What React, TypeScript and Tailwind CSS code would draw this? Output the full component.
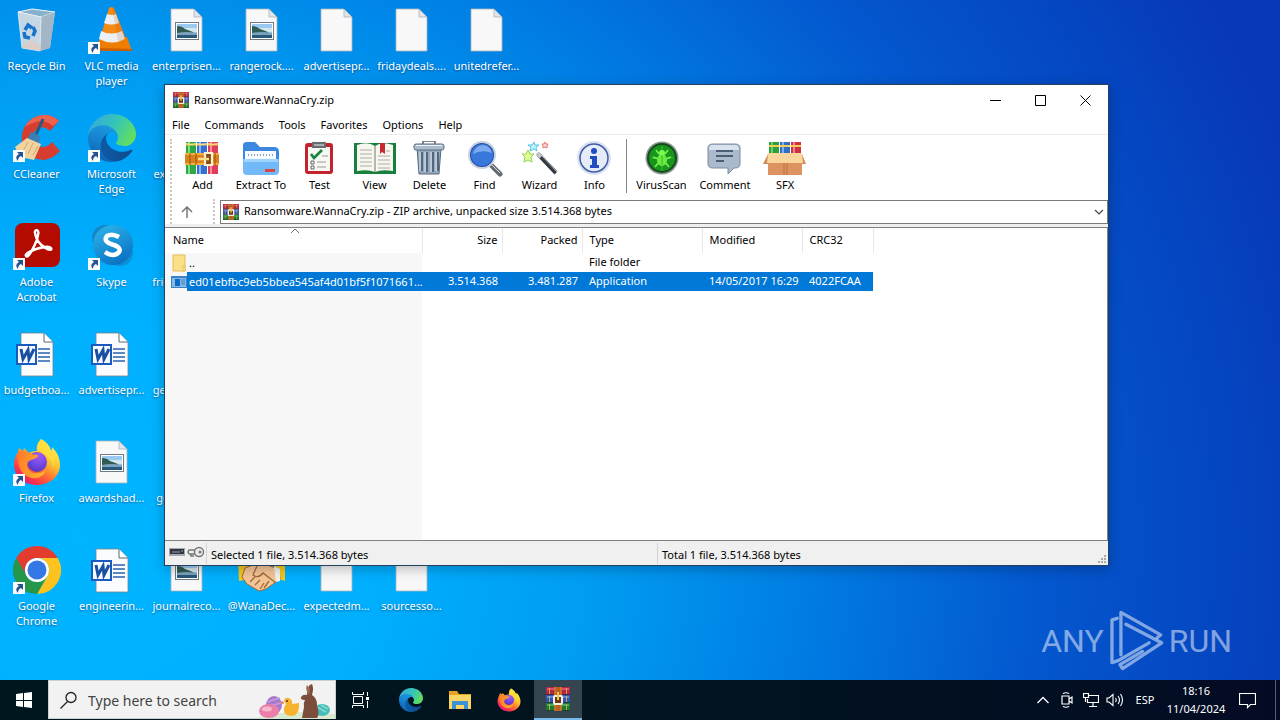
import { ReactNode } from 'react';

type IconKind =
  | 'bin' | 'vlc' | 'image' | 'blank' | 'ccleaner' | 'edge' | 'acrobat' | 'skype'
  | 'word' | 'firefox' | 'chrome' | 'handshake';

interface DesktopItem {
  label: string;
  icon: IconKind;
  shortcut?: boolean;
}

// one array per desktop column, null = empty cell
const DESKTOP: (DesktopItem | null)[][] = [
  [
    { label: 'Recycle Bin', icon: 'bin' },
    { label: 'CCleaner', icon: 'ccleaner', shortcut: true },
    { label: 'Adobe Acrobat', icon: 'acrobat', shortcut: true },
    { label: 'budgetboa...', icon: 'word' },
    { label: 'Firefox', icon: 'firefox', shortcut: true },
    { label: 'Google Chrome', icon: 'chrome', shortcut: true },
  ],
  [
    { label: 'VLC media player', icon: 'vlc', shortcut: true },
    { label: 'Microsoft Edge', icon: 'edge', shortcut: true },
    { label: 'Skype', icon: 'skype', shortcut: true },
    { label: 'advertisepr...', icon: 'word' },
    { label: 'awardshad...', icon: 'image' },
    { label: 'engineerin...', icon: 'word' },
  ],
  [
    { label: 'enterprisen...', icon: 'image' },
    { label: 'expectedm...', icon: 'blank' },
    { label: 'fridaydeals....', icon: 'blank' },
    { label: 'generalboa...', icon: 'blank' },
    { label: 'goodshad...', icon: 'blank' },
    { label: 'journalreco...', icon: 'image' },
  ],
  [{ label: 'rangerock....', icon: 'image' }, null, null, null, null, { label: '@WanaDec...', icon: 'handshake' }],
  [{ label: 'advertisepr...', icon: 'blank' }, null, null, null, null, { label: 'expectedm...', icon: 'blank' }],
  [{ label: 'fridaydeals....', icon: 'blank' }, null, null, null, null, { label: 'sourcesso...', icon: 'blank' }],
  [{ label: 'unitedrefer...', icon: 'blank' }, null, null, null, null, null],
];

const MENU = ['File', 'Commands', 'Tools', 'Favorites', 'Options', 'Help'];

const EdgeIcon = ({ className }: { className: string }) => (
  <svg viewBox="0 0 256 256" className={className}>
    <defs>
      <linearGradient id="edgeA" x1="0.2" x2="1" y1="0.5" y2="0.6"><stop offset="0" stopColor="#0c59a4" /><stop offset="1" stopColor="#114a8b" /></linearGradient>
      <linearGradient id="edgeB" x1="0.6" x2="0.3" y1="0" y2="1"><stop offset="0" stopColor="#1b9de2" /><stop offset="0.5" stopColor="#1680cf" /><stop offset="1" stopColor="#0d5fb0" /></linearGradient>
      <linearGradient id="edgeC" x1="0" x2="1" y1="0.3" y2="0.7"><stop offset="0" stopColor="#35a9dc" /><stop offset="0.5" stopColor="#36c6b6" /><stop offset="1" stopColor="#66e056" /></linearGradient>
    </defs>
    <path fill="url(#edgeA)" d="M231.1 190.5c-3.4 1.8-6.9 3.4-10.5 4.7-11.5 4.3-23.6 6.5-35.9 6.5-47.3 0-88.5-32.5-88.5-74.3.1-11.4 6.4-21.9 16.4-27.3-42.8 1.8-53.8 46.4-53.8 72.5 0 74 68.1 81.4 82.8 81.4 7.9 0 19.8-2.3 27-4.6l1.3-.4c27.6-9.5 51-28.1 66.6-52.8 1.2-1.9.6-4.3-1.2-5.5-1.3-.8-2.9-.9-4.2-.2z" />
    <path fill="url(#edgeB)" d="M105.7 241.4c-8.9-5.5-16.6-12.8-22.7-21.3-26.3-36-18.4-86.5 17.6-112.8 3.8-2.7 7.7-5.2 11.9-7.2 3.1-1.5 8.4-4.1 15.5-4 10.1.1 19.6 4.9 25.7 13 4 5.4 6.3 11.9 6.4 18.7 0-.2 24.5-79.6-80-79.6-43.9 0-80 41.7-80 78.2-.2 19.3 4 38.5 12.1 56 27.6 58.8 94.8 87.6 156.4 67.1-21.1 6.6-44.1 3.7-62.9-8.1z" />
    <path fill="url(#edgeC)" d="M152.3 148.9c-.8 1-3.3 2.5-3.3 5.7 0 2.6 1.7 5.1 4.7 7.2 14.4 10 41.5 8.7 41.6 8.7 10.7 0 21.1-2.9 30.3-8.3 18.8-11 30.4-31.1 30.4-52.9.3-22.4-8-37.3-11.3-43.9C223.5 23.9 177.7 0 128 0 58 0 1 56.2 0 126.2c.5-36.5 36.8-66 80-66 3.5 0 23.5.3 42 10.1 16.3 8.6 24.9 18.9 30.8 29.2 6.2 10.7 7.3 24.1 7.3 29.5 0 5.3-2.7 13.3-7.8 19.9z" />
  </svg>
);

const FirefoxIcon = ({ className }: { className: string }) => (
  <svg viewBox="0 0 48 48" className={className}>
    <defs>
      <linearGradient id="ffA" x1="0.8" x2="0.2" y1="0.1" y2="0.95"><stop offset="0" stopColor="#fff04a" /><stop offset="0.35" stopColor="#ffbd2f" /><stop offset="0.6" stopColor="#ff7034" /><stop offset="0.85" stopColor="#f8304f" /><stop offset="1" stopColor="#e3157f" /></linearGradient>
      <radialGradient id="ffB" cx="0.6" cy="0.2" r="0.9"><stop offset="0" stopColor="#a45af5" /><stop offset="0.6" stopColor="#6a45e0" /><stop offset="1" stopColor="#5a2fa8" /></radialGradient>
      <linearGradient id="ffC" x1="0" x2="1" y1="0.2" y2="0.5"><stop offset="0" stopColor="#ff7a2a" /><stop offset="1" stopColor="#ffb52e" /></linearGradient>
    </defs>
    <path fill="url(#ffA)" d="M28 1c7 4 9 8 10 12 1-1 1-3 1-4 5 5 8 11 8 18 0 11-10 20-23 20S1 38 1 26c0-5 2-9 4-12l1-4 4 3 1-3 5 5c3-2 6-2 8-2-1-5 1-9 4-12z" />
    <circle cx="24" cy="24" r="10" fill="url(#ffB)" />
    <path fill="#ffdf3d" opacity=".75" d="M28 1c7 4 9 8 10 12 3 5 5 11 3 17-1-5-3-8-6-10-1-4-8-6-10-8-1-4 1-8 3-11z" />
    <path fill="url(#ffC)" d="M5 14c4-2 9-1 12 1 2 2 5 1 8 2 0 3-4 4-7 5s-4 3-4 6c1 5 6 8 11 7 4 0 6-2 8-3-2 6-8 9-14 8C9 38 4 30 5 14z" />
  </svg>
);

// three stacked books held by a vertical belt
const RarIcon = ({ className }: { className: string }) => (
  <svg viewBox="0 0 24 24" className={className}>
    <rect x="0" y="0" width="24" height="8" fill="#b02848" /><rect x="1" y="1" width="22" height="2" fill="#d8506d" />
    <rect x="0" y="8" width="24" height="8" fill="#2f55b4" /><rect x="1" y="9" width="22" height="2" fill="#5f86dc" />
    <rect x="0" y="16" width="24" height="8" fill="#1d7a33" /><rect x="1" y="17" width="22" height="2" fill="#45ac58" />
    <path d="M3.500 1v6M3.500 9v6M3.500 17v6M20.500 1v6M20.500 9v6M20.500 17v6" stroke="#e8b93c" strokeOpacity=".8" />
    <path d="M0 7.500h24M0 15.500h24M0 23.500h24" stroke="#1c1c28" strokeOpacity=".6" />
    <rect x="8.500" width="7" height="24" fill="#b9601e" /><path d="M9 0v24M15 0v24" stroke="#e08a34" />
    <rect x="8" y="9" width="8" height="8" rx="1" fill="#6b3a14" stroke="#f4eee4" strokeWidth="2" />
    <path d="M12 5v8" stroke="#f2c84a" strokeWidth="2" />
  </svg>
);

const FoldedPage = ({ children }: { children?: ReactNode }) => (
  <>
    <path d="M8 3h23l8 8v34H8z" fill="#f8f8f8" stroke="#a9b4bc" strokeWidth=".8" />
    <path d="M31 3v8h8z" fill="#dfe5e9" stroke="#a9b4bc" strokeWidth=".8" />
    {children}
  </>
);

const DRAWINGS: Record<Exclude<IconKind, 'edge' | 'firefox'>, ReactNode> = {
  bin: (
    <>
      <path d="M5 6 19 3l23 3-5 36-10 3-18-3z" fill="#b4cde0" />
      <path d="M5 6 19 3l23 3-14 5z" fill="#86b0cc" stroke="#eef5fa" />
      <path d="m28 11 14-5-5 36-10 3z" fill="#a3b6c6" />
      <path d="M5 6l23 5-1 34-18-3z" fill="#c5d7e5" stroke="#e8f1f7" strokeWidth=".7" />
      <path d="m9 40 9-6 9 5v6l-18-3z" fill="#dccdc8" />
      <g fill="none" stroke="#1674cc" strokeWidth="3.500">
        <path d="m12 24 3-5 4 3" /><path d="m20 21 2 4-2 5" /><path d="m11 26 1 5 5 1" />
      </g>
    </>
  ),
  vlc: (
    <>
      <path d="m12 32-4 12 36 1-5-14z" fill="#ef7d00" /><path d="m8 42 36 1v2H8z" fill="#c85f00" />
      <path d="M21 2q3-2 5 0l12 31q-13 8-26 0z" fill="#f58a14" />
      <path d="m19 8-3 9q7 3 15 0l-3-9q-4 2-9 0zM13 25l-2 8q13 7 26 0l-3-8q-11 5-21 0z" fill="#edf0f2" />
      <path d="M24 1h2l12 32-8 3z" fill="#a74b00" opacity=".16" />
    </>
  ),
  image: (
    <FoldedPage>
      <rect x="12.500" y="16.500" width="23" height="17" fill="#fff" stroke="#6f7a84" />
      <path d="M14 18h20v14H14z" fill="#9cc9f0" /><path d="M14 22h20v4H14z" fill="#d4e6ee" />
      <path d="M14 20q5 0 8 3l8 3v2H14z" fill="#2f5b52" /><path d="M14 27q9-2 20 0v2H14z" fill="#7ba3bd" /><path d="M14 29h20v3H14z" fill="#29577a" />
    </FoldedPage>
  ),
  blank: <FoldedPage />,
  ccleaner: (
    <>
      <path d="M46 7Q35-3 20 4 7 12 9 28q4 17 22 18 9-1 16-9l-8-9q-7 8-15 3-7-6-3-13 7-9 16-1z" fill="#d63c30" />
      <path d="M46 7Q35-3 20 4q-6 4-8 9 17-11 28-1z" fill="#ee6250" />
      <path d="m30 5-9 20" stroke="#27597f" strokeWidth="3" /><path d="m18 18 9 4-1 9-12-5z" fill="#3980b4" />
      <path d="M14 24 2 33l5 10 14 3 7-16z" fill="#f1d3a0" /><path d="m15 28-5 9m10-8-5 11m10-8-5 9" stroke="#c99c5f" strokeWidth=".8" />
    </>
  ),
  acrobat: (
    <>
      <rect x="2" y="1" width="45" height="44" rx="8" fill="#b30b00" />
      <path d="M13 34c-3-4 22-12 25-8 3 5-14-1-16-15-1-4 5-4 3 2-1 7-10 25-12 21z" fill="none" stroke="#fff" strokeWidth="2.400" strokeLinejoin="round" />
    </>
  ),
  skype: (
    <>
      <defs>
        <linearGradient id="skA" x1="0.2" x2="0.7" y1="0" y2="1"><stop offset="0" stopColor="#2bb3ea" /><stop offset="1" stopColor="#0a6fc2" /></linearGradient>
      </defs>
      <circle cx="17" cy="16" r="13" fill="#1586c9" /><circle cx="32" cy="31" r="13" fill="#0f8fd8" />
      <circle cx="25" cy="23" r="20" fill="url(#skA)" />
      <path d="M31 15q-7-4-12-1-4 5 4 8 11 3 8 8-5 6-14 0" fill="none" stroke="#fff" strokeWidth="4.500" />
    </>
  ),
  word: (
    <>
      <path d="M8 3h23l9 9v34H8z" fill="#fbfcfd" stroke="#718493" strokeWidth=".8" />
      <path d="M31 3v9h9" fill="#fff" stroke="#566878" />
      <path d="M25 19h12M25 23h12M25 27h12M25 31h12" stroke="#2862ad" strokeWidth="1.300" />
      <rect x="4" y="15" width="19" height="19" fill="#f7fbff" stroke="#185abd" strokeWidth="2" />
      <path d="m8 19 2 10 5-9 1 9 5-10" fill="none" stroke="#184fa0" strokeWidth="3" />
    </>
  ),
  chrome: (
    <>
      <path d="M3.200 12A24 24 0 0 1 44.800 12H24A12 12 0 0 0 13.600 30z" fill="#e33b2e" />
      <path d="M44.800 12A24 24 0 0 1 24 48l10.400-18A12 12 0 0 0 24 12z" fill="#fcc31e" />
      <path d="M24 48A24 24 0 0 1 3.200 12l10.400 18a12 12 0 0 0 20.800 0z" fill="#269748" />
      <circle cx="24" cy="24" r="12" fill="#fff" /><circle cx="24" cy="24" r="9.500" fill="#3478e5" />
    </>
  ),
  handshake: (
    <>
      <path d="M0 15h12v18l-11 2zM36 15h11v20l-10-3z" fill="#f6c81c" />
      <path d="m7 22 10-4 12 1 12 4 1 10-14 10-7 2-12-7-5-7z" fill="#f5c698" stroke="#a06a34" />
      <path d="m19 20-4 9q5 4 10-2l13 10M12 36l5-5m0 8 5-5m0 9 4-6M31 35l-5 7" fill="none" stroke="#a06a34" strokeWidth="1.300" />
      <path d="m36 20 6 3v12l-4 1z" fill="#f1f3ef" />
    </>
  ),
};

const DesktopIcon = ({ kind }: { kind: IconKind }) => {
  if (kind === 'edge') return <EdgeIcon className="size-12" />;
  if (kind === 'firefox') return <FirefoxIcon className="size-12" />;
  return <svg viewBox="0 0 48 48" className="size-12">{DRAWINGS[kind]}</svg>;
};

const ShortcutArrow = () => (
  <svg viewBox="0 0 12 12" className="absolute bottom-0 left-0 size-3">
    <path d="M0 0h12v12H0z" fill="#f9fbfd" />
    <path d="M4 2h6v6L8 6q-3 1-3 5-4-4 1-7z" fill="#26528f" />
  </svg>
);

const DesktopCell = ({ item }: { item: DesktopItem | null }) => {
  if (!item) return <div className="h-[108px]" />;
  return (
    <button className="flex h-[108px] flex-col items-center pt-1.5 pr-0.5">
      <span className="relative">
        <DesktopIcon kind={item.icon} />
        {item.shortcut && <ShortcutArrow />}
      </span>
      <span className="mt-1 w-[74px] px-1 text-center leading-[15px] text-white text-shadow-[0_1px_2px_rgb(0_40_90/0.6)]">
        <span className="-mx-1 inline-block">{item.label}</span>
      </span>
    </button>
  );
};

interface Tool {
  label: string;
  width: string;
  drawing: ReactNode;
  wide?: boolean;
}

const TOOLS: Tool[] = [
  {
    label: 'Add', width: 'w-[55px]', drawing: (
      <>
        <path d="M1 1h10v32H1z" fill="#2fa843" /><path d="M12 1h10v32H12z" fill="#386ed2" /><path d="M23 1h10v32H23z" fill="#dd3e59" />
        <path d="M3 1h2v32H3z" fill="#7be083" /><path d="M14 1h2v32h-2z" fill="#84b5ff" /><path d="M25 1h2v32h-2z" fill="#ff8da0" />
        <path d="M1 3.500h10M12 3.500h10M23 3.500h10" stroke="#f5c842" strokeWidth="2" />
        <path d="M1 2.500q5 2 10 0M12 2.500q5 2 10 0M23 2.500q5 2 10 0" fill="none" stroke="#fff" strokeOpacity=".5" />
        <path d="M0 12h34v12H0z" fill="#d9821d" /><path d="M0 13h34M0 23h34" stroke="#ffc04b" strokeWidth="1.500" />
        <path d="M5 12v12M11 12v12M30 12v12" stroke="#96500f" />
        <path d="M20 12h7v12h-7z" fill="#8a4a12" stroke="#fff2d4" strokeWidth="2.200" /><path d="M13 18h11" stroke="#fae08c" strokeWidth="2.500" />
      </>
    ),
  },
  {
    label: 'Extract To', width: 'w-[62px]', wide: true, drawing: (
      <>
        <path d="M0 4q0-3 4-3h8l5 5h14q5 0 5 5v20H0z" fill="#3c87df" />
        <path d="M2 10h31v18H2z" fill="#f7faff" /><path d="M5 14h26" stroke="#8ea4ba" strokeWidth="2" strokeDasharray="1 2" />
        <path d="M0 18h36v12q0 4-4 4H4q-4 0-4-4z" fill="#72b9f7" /><path d="M1 18h34v3H1z" fill="#9fd4ff" /><path d="M22 28h10v3H22z" fill="#d84745" />
      </>
    ),
  },
  {
    label: 'Test', width: 'w-[55px]', drawing: (
      <>
        <rect x="3" y="2" width="28" height="31" rx="3" fill="#c4222d" /><path d="M6 6h22v24H6z" fill="#f7f7f4" />
        <path d="M10 2q0-2 3-1h8q3-1 3 1v5H10z" fill="#686b70" /><path d="M12 4h10" stroke="#f0f0f0" />
        <path d="m9 13 3 4 8-8" fill="none" stroke="#16843a" strokeWidth="2.600" />
        <path d="M9 20h3v3H9zM9 25h3v3H9z" fill="none" stroke="#666" /><path d="M20 15h6M15 21h9M15 26h9" stroke="#999" />
      </>
    ),
  },
  {
    label: 'View', width: 'w-[55px]', wide: true, drawing: (
      <>
        <path d="M-3 2h42v31H-3z" fill="#18803c" /><path d="M0 4q11-4 18 1 7-5 18-1v26q-11-2-18 1-7-3-18-1z" fill="#f8f7ef" />
        <path d="M18 5v26" stroke="#787265" /><path d="M3 9h12M3 13h12M3 17h12M3 21h12M3 25h12M21 15h12M21 19h12M21 23h12M29 10h4M21 27h12" stroke="#aaa" />
        <path d="M23 2h5v11l-3-2-2 2z" fill="#c62b34" />
      </>
    ),
  },
  {
    label: 'Delete', width: 'w-[55px]', drawing: (
      <>
        <path d="M5 7h24l-2 26H7z" fill="#95a9be" stroke="#56697f" /><path d="M10 11v19m5-19v20m6-20v20m5-20v19" stroke="#53677e" strokeWidth="2" />
        <path d="M8 11v19m5-19v20m6-20v20m5-20v19" stroke="#e0e9f1" /><rect x="2" y="3" width="30" height="6" rx="2" fill="#aabdcc" stroke="#596d80" />
        <path d="M11 3V0h12v3" fill="none" stroke="#5c6269" strokeWidth="1.500" /><path d="M4 4.500h26" stroke="#f0f5fa" />
      </>
    ),
  },
  {
    label: 'Find', width: 'w-[55px]', drawing: (
      <>
        <path d="m24 24 9 9" stroke="#636a73" strokeWidth="5" strokeLinecap="round" /><path d="m25 24 8 8" stroke="#d8dbe0" />
        <circle cx="15" cy="14" r="14" fill="#c8d2df" /><circle cx="15" cy="14" r="12" fill="#244da7" /><circle cx="15" cy="14" r="11" fill="#3978db" />
        <path d="M6 13q2-9 11-9 6 1 8 8-10-4-19 1z" fill="#8db7f5" opacity=".8" />
      </>
    ),
  },
  {
    label: 'Wizard', width: 'w-[55px]', drawing: (
      <>
        <path d="m16 13 18 19" stroke="#343941" strokeWidth="4" /><path d="m15 12 4 4" stroke="#bcc4cc" strokeWidth="4" /><path d="m20 15 15 16" stroke="#b3bac1" />
        <path d="m6 9 2 4h4l-3 3 1 5-4-2-4 2 1-5-3-3h4z" fill="#e2fb9d" stroke="#8fd64f" />
        <path d="m12 1 1 3h4l-3 2 1 4-3-2-4 2 1-4-3-2h4z" fill="#bcf1ff" stroke="#57c4e5" />
        <path d="m23 1 1 2h2l-1 2v2l-2-1-2 1v-2l-1-2h2z" fill="#ffd4d4" stroke="#ee7474" />
      </>
    ),
  },
  {
    label: 'Info', width: 'w-[55px]', drawing: (
      <>
        <circle cx="17" cy="17" r="17" fill="#dbe2f0" /><circle cx="17" cy="17" r="14" fill="#e5ecf8" stroke="#3f5aa8" strokeWidth="1.500" />
        <circle cx="17" cy="10" r="3" fill="#224dc0" /><path d="M13 15h7v9h2v3h-9v-3h2v-6h-2z" fill="#224dc0" />
      </>
    ),
  },
];

const EXTRA_TOOLS: Tool[] = [
  {
    label: 'VirusScan', width: 'w-[61px]', drawing: (
      <>
        <circle cx="18" cy="17" r="16.500" fill="#8e9991" /><circle cx="18" cy="17" r="15" fill="#174c1e" /><circle cx="18" cy="17" r="13" fill="#18961b" />
        <path d="M18 5v25M7 17h22" stroke="#49d83a" strokeOpacity=".6" />
        <path d="m12 9 3 4m9-4-3 4M9 16l5 2m13-2-5 2M11 26l4-5m10 5-4-5" stroke="#7cf34d" strokeWidth="1.500" />
        <ellipse cx="18" cy="19" rx="5" ry="6" fill="#6aeb40" /><circle cx="18" cy="12" r="3" fill="#7bfc50" /><path d="M18 14v10" stroke="#3fb432" />
      </>
    ),
  },
  {
    label: 'Comment', width: 'w-[66px]', drawing: (
      <>
        <path d="M6 3h22q5 0 5 4v16q0 4-5 4h-1l-6 6v-6H6q-5 0-5-4V7q0-4 5-4z" fill="#aab9cb" stroke="#7b8ca2" />
        <path d="M5 4h24q3 1 3 5H2q0-5 3-5z" fill="#d8e2ee" /><path d="M9 10h17M9 15h17M9 20h8" stroke="#4c5e76" strokeWidth="1.800" />
      </>
    ),
  },
  {
    label: 'SFX', width: 'w-[54px]', wide: true, drawing: (
      <>
        <path d="M2 1h10v12H2z" fill="#2c9e3c" /><path d="M13 1h10v12H13z" fill="#326fc4" /><path d="M24 1h10v12H24z" fill="#cc3340" />
        <path d="M4 1h2v12H4z" fill="#66cf70" /><path d="M15 1h2v12h-2z" fill="#7fb0f4" /><path d="M26 1h2v12h-2z" fill="#f27f8c" />
        <path d="M2 5h10m1 0h10m1 0h10" stroke="#f5cc51" strokeWidth="2" />
        <path d="M1 13h34v21H1z" fill="#dc9360" /><path d="m1 13-5 10h5zM35 13l4 10h-4z" fill="#d08a55" />
        <path d="M1 12h34l1 10H0z" fill="#f8d69c" /><path d="M17 22v12m3-12v12" stroke="#b96e43" />
      </>
    ),
  },
];

const ToolButton = ({ tool }: { tool: Tool }) => (
  <button className={`flex shrink-0 flex-col items-center pt-0.5 ${tool.width}`}>
    <svg viewBox={tool.wide ? '-4 0 44 36' : '0 0 36 36'} className={`h-9 ${tool.wide ? 'w-11' : 'w-9'}`}>{tool.drawing}</svg>
    <span className="leading-4">{tool.label}</span>
  </button>
);

interface Entry {
  name: string;
  size: string;
  packed: string;
  type: string;
  modified: string;
  crc: string;
  selected?: boolean;
}

const ENTRIES: Entry[] = [
  { name: '..', size: '', packed: '', type: 'File folder', modified: '', crc: '' },
  {
    name: 'ed01ebfbc9eb5bbea545af4d01bf5f1071661...', size: '3.514.368', packed: '3.481.287',
    type: 'Application', modified: '14/05/2017 16:29', crc: '4022FCAA', selected: true,
  },
];

const FileTable = () => (
  <table className="w-[708px] table-fixed border-collapse text-left">
    <colgroup>
      <col className="w-[257px]" />
      <col className="w-20" />
      <col className="w-20" />
      <col className="w-[120px]" />
      <col className="w-[100px]" />
      <col className="w-[71px]" />
    </colgroup>
    <thead>
      <tr className="h-[25px] *:border-r *:border-[#e8e8e8] *:font-normal">
        <th className="relative pl-2">
          Name
          <svg viewBox="0 0 10 6" className="absolute top-0 left-[125px] h-1.5 w-2.5"><path d="m1 5 4-4 4 4" fill="none" stroke="#777" /></svg>
        </th>
        <th className="pr-1 text-right">Size</th>
        <th className="pr-1 text-right">Packed</th>
        <th className="pl-[7px]">Type</th>
        <th className="pl-[7px]">Modified</th>
        <th className="pl-[7px]">CRC32</th>
      </tr>
    </thead>
    <tbody>
      {ENTRIES.map(e => (
        <tr key={e.name} className={`h-[19px] whitespace-nowrap ${e.selected ? 'bg-[#0078d7] text-white' : ''}`}>
          <td className="bg-[#f7f7f7] p-0">
            <div className="flex h-[19px] items-center pl-1.5">
              {e.selected ? (
                <svg viewBox="0 0 16 12" className="h-3 w-4 shrink-0">
                  <path d="M0 0h16v12H0z" fill="#3a83c4" /><path d="M1 2h14v9H1z" fill="#86b8e4" />
                  <path d="M4 3h5v7H4z" fill="#0d69c8" /><path d="M10 4h4M10 6h4M10 8h4" stroke="#3a83c4" />
                </svg>
              ) : (
                <svg viewBox="0 0 16 18" className="h-[18px] w-4 shrink-0">
                  <path d="M2 1h12v16H2z" fill="#fbe08a" stroke="#e3bd55" /><path d="M12 12h2v5h-2z" fill="#fff3bd" stroke="#e3bd55" />
                </svg>
              )}
              <span className={`flex-1 pl-0.5 leading-[19px] ${e.selected ? 'bg-[#0078d7]' : ''}`}>{e.name}</span>
            </div>
          </td>
          <td className="py-0 pr-1 text-right">{e.size}</td>
          <td className="py-0 pr-1 text-right">{e.packed}</td>
          <td className="py-0 pl-[7px]">{e.type}</td>
          <td className="py-0 pl-[7px]">{e.modified}</td>
          <td className="py-0 pl-[7px]">{e.crc}</td>
        </tr>
      ))}
    </tbody>
  </table>
);

const Grip = () => <div className="w-0 self-stretch border-l-2 border-dotted border-[#c8c8c8]" />;

const ArchiveWindow = () => (
  <section className="absolute top-[84px] left-[164px] flex h-[482px] w-[945px] flex-col border border-[#24405f] bg-white text-black shadow-[0_3px_12px_rgb(0_0_0/0.25)]">
    <header className="flex h-[30px] shrink-0 items-center pl-2">
      <RarIcon className="size-4" />
      <h1 className="ml-[5px] flex-1">Ransomware.WannaCry.zip</h1>
      <button aria-label="Minimize" className="flex h-full w-[46px] items-center justify-center">
        <svg viewBox="0 0 11 11" className="size-[11px]"><path d="M0 5.500h11" stroke="#000" /></svg>
      </button>
      <button aria-label="Maximize" className="flex h-full w-[45px] items-center justify-center">
        <svg viewBox="0 0 11 11" className="size-[11px]"><path d="M.5.5h10v10H.5z" fill="none" stroke="#000" /></svg>
      </button>
      <button aria-label="Close" className="flex h-full w-[45px] items-center justify-center">
        <svg viewBox="0 0 11 11" className="size-[11px]"><path d="m.5.5 10 10m0-10-10 10" stroke="#000" /></svg>
      </button>
    </header>
    <nav className="flex h-5 shrink-0 items-center gap-[15px] border-b border-[#ededed] pt-0.5 pl-[7px]">
      {MENU.map(m => <button key={m}>{m}</button>)}
    </nav>
    <div className="flex shrink-0 pt-1 pl-[5px]">
      <Grip />
      <div className="flex min-w-0 flex-1 flex-col">
        <div className="flex h-[60px] items-start pl-[3px]">
          {TOOLS.map(t => <ToolButton key={t.label} tool={t} />)}
          <div className="mx-1 h-[54px] w-px bg-[#888]" />
          {EXTRA_TOOLS.map(t => <ToolButton key={t.label} tool={t} />)}
        </div>
        <div className="flex h-[25px] items-center">
          <button aria-label="Up one level" className="flex w-[41px] justify-center pr-3">
            <svg viewBox="0 0 12 12" className="size-3"><path d="M6 12V1M1 6l5-5 5 5" fill="none" stroke="#777" strokeWidth="1.500" /></svg>
          </button>
          <Grip />
          <div className="relative ml-[5px] flex h-6 flex-1 items-center border border-[#7a7a7a] pl-0.5">
            <RarIcon className="size-4" />
            <select aria-label="Archive path" className="h-full flex-1 appearance-none bg-transparent pl-[5px]">
              <option>Ransomware.WannaCry.zip - ZIP archive, unpacked size 3.514.368 bytes</option>
            </select>
            <svg viewBox="0 0 10 6" className="pointer-events-none absolute right-[3px] h-1.5 w-2.5"><path d="m1 1 4 4 4-4" fill="none" stroke="#444" strokeWidth="1.200" /></svg>
          </div>
        </div>
      </div>
    </div>
    <div className="h-[3px] shrink-0 bg-[#f0f0f0]" />
    <main className="flex min-h-0 flex-1 flex-col border-t border-r border-b border-[#7d8087]">
      <FileTable />
      <div className="w-[257px] flex-1 bg-[#f7f7f7]" />
    </main>
    <footer className="flex h-6 shrink-0 items-center bg-[#f0f0f0]">
      <svg viewBox="0 0 36 14" className="ml-1 h-3.5 w-9">
        <path d="M0 2h16v8H0z" fill="#a4a9af" /><path d="M1 3h14v5H1z" fill="#33373c" /><path d="M3 6h8M12 5h2" stroke="#8fa2b7" />
        <circle cx="30" cy="6" r="4.500" fill="#eee" stroke="#777" strokeWidth="1.500" /><circle cx="31" cy="6" r="1.500" fill="#777" />
        <path d="M26 4h-6l-1 2 1 2h6M22 8v2h3" fill="none" stroke="#777" strokeWidth="1.500" />
      </svg>
      <p className="ml-px w-[451px] border-l border-[#d4d4d4] pt-[3px] pl-1 leading-[18px]">Selected 1 file, 3.514.368 bytes</p>
      <p className="flex-1 border-l border-[#d4d4d4] pt-[3px] pl-1 leading-[18px]">Total 1 file, 3.514.368 bytes</p>
      <svg viewBox="0 0 10 10" className="size-2.5 self-end" fill="#aaa">
        <path d="M6 0h2v2H6zM3 3h2v2H3zM6 3h2v2H6zM0 6h2v2H0zM3 6h2v2H3zM6 6h2v2H6z" />
      </svg>
    </footer>
  </section>
);

const Watermark = () => (
  <div className="absolute right-12 bottom-2 flex items-center text-white/50">
    <span className="font-[Roboto,'Liberation_Sans',sans-serif] text-[32px] leading-none">ANY</span>
    <svg viewBox="296 28 172 190" className="mx-1 h-[63px] w-[57px]" fill="none" stroke="currentColor" strokeWidth="10" strokeLinecap="round" strokeLinejoin="round">
      <path d="m324 56-16 5v129l20-7 92-53" />
      <path d="M335 166V38l120 68-10 8" />
      <path d="m350 74 108 56-118 78-8-12 68-40" />
    </svg>
    <span className="font-[Roboto,'Liberation_Sans',sans-serif] text-[32px] leading-none">RUN</span>
  </div>
);

const SearchArt = () => (
  <svg viewBox="0 0 76 38" className="h-[38px] w-[76px] shrink-0">
    <path d="M0 36q28-8 76-3v5H0z" fill="#d7e9cf" />
    <ellipse cx="15" cy="24" rx="8" ry="9" fill="#a97acb" /><path d="m8 21 13-4M7 26l15-4" stroke="#c79be0" strokeWidth="1.500" />
    <ellipse cx="10" cy="30" rx="10" ry="7" fill="#ea7fa9" /><ellipse cx="8" cy="28" rx="5" ry="2.500" fill="#f8b9cf" />
    <path d="M25 20q1-4 5-3 4 2 3 6l7-1q1 12-7 13-9 0-8-8l2-4z" fill="#f7b32f" /><path d="m24 20-3 2 4 1z" fill="#e9742a" /><circle cx="28" cy="20" r="1" fill="#473224" />
    <ellipse cx="63" cy="29" rx="8" ry="6" fill="#48bdb7" /><path d="m58 26 9 5m-5-7 7 4" stroke="#7edbd3" strokeWidth="1.500" />
    <path d="M48 14q0-10 5-11 2 4 0 11 5 3 5 10 3 10 0 13H43l2-11q-1-4 1-7-5 0-4-3 2-3 6-2z" fill="#7a4e3b" />
    <path d="M49 13q-3-6-1-9l3 4-1 6z" fill="#9b6e57" />
  </svg>
);

const Taskbar = () => (
  <footer className="flex h-10 shrink-0 items-stretch bg-linear-to-r from-[#00161f] via-[#02141f] to-[#030b24] text-white">
    <button aria-label="Start" className="flex w-12 items-center justify-center">
      <svg viewBox="0 0 16 16" className="size-4" fill="#fff"><path d="m0 2 7-1v7H0zM8 1l8-1v8H8zM0 9h7v6l-7-1zM8 9h8v7l-8-1z" /></svg>
    </button>
    <label className="mb-px flex w-72 items-center border border-[#c9d0d2] bg-[#f2f2f2] pl-[11px]">
      <svg viewBox="0 0 18 18" className="size-[18px] shrink-0" fill="none" stroke="#222" strokeWidth="1.300"><circle cx="11" cy="6.500" r="5" /><path d="m7.500 10.500-7 7" /></svg>
      <input aria-label="Search" placeholder="Type here to search" className="min-w-0 flex-1 pt-0.5 pl-2.5 text-sm text-[#333] outline-none placeholder:text-[#444]" />
      <SearchArt />
    </label>
    <div className="flex flex-1 gap-px">
      <button aria-label="Task view" className="flex w-[50px] items-center justify-center">
        <svg viewBox="0 0 18 16" className="h-4 w-[18px]" fill="none" stroke="#fff">
          <path d="M.5 0v2.500h11V0M.5 16v-2.500h11V16M1.500 4.500h9v7h-9zM15.500 0v4M15.500 9v7" /><path d="M14 5h3v3h-3z" fill="#fff" stroke="none" />
        </svg>
      </button>
      <button aria-label="Microsoft Edge" className="flex w-12 items-center justify-center"><EdgeIcon className="size-6" /></button>
      <button aria-label="File Explorer" className="flex w-12 items-center justify-center">
        <svg viewBox="0 0 24 24" className="size-6">
          <path d="M1 3h8l2 3h12v14H1z" fill="#e5a323" /><path d="M1 7h22v14H1z" fill="#fbd667" />
          <path d="M4 13h16v8h-4v-4H8v4H4z" fill="#3c94d4" />
        </svg>
      </button>
      <button aria-label="Firefox" className="flex w-12 items-center justify-center"><FirefoxIcon className="size-6" /></button>
      <button aria-label="WinRAR" className="flex w-12 items-center justify-center border-b-2 border-[#76b9ed] bg-[#34454f]"><RarIcon className="size-6" /></button>
    </div>
    <div className="flex items-center">
      <button aria-label="Show hidden icons" className="px-1.5">
        <svg viewBox="0 0 12 8" className="h-2 w-3"><path d="m.5 7 5.500-5.500L11.500 7" fill="none" stroke="#fff" strokeWidth="1.300" /></svg>
      </button>
      <svg viewBox="0 0 16 16" className="mx-1 size-4" fill="none" stroke="#fff" strokeWidth="1.200">
        <path d="M3 4h7v8H3zM10 7l3-2v6l-3-2M4 1.500q3-1.500 6 0M4 14.500q3 1.500 6 0" />
      </svg>
      <svg viewBox="0 0 16 16" className="mx-1 size-4" fill="none" stroke="#fff" strokeWidth="1.200">
        <path d="M5 3.500h10.500v7H4.500V7M10 10.500V14M6 14.500h8M.5 1.500h5v4h-5zM2.500 5.500V10" />
      </svg>
      <svg viewBox="0 0 18 16" className="mx-[3px] h-4 w-[18px]" fill="none" stroke="#fff" strokeWidth="1.100">
        <path d="M1 6h2l4-3.500v11L3 10H1zM9.500 6q1.500 2 0 4M12 4q3 4 0 8M14.500 2q4 6 0 12" />
      </svg>
      <span className="w-9 text-center">ESP</span>
      <time className="w-[66px] text-center leading-[18px]">18:16<br />11/04/2024</time>
      <button aria-label="Notifications" className="px-2.5">
        <svg viewBox="0 0 17 17" className="size-[17px]"><path d="M.5 1.500h16v11h-5l-3 3v-3h-8z" fill="none" stroke="#fff" strokeWidth="1.200" /></svg>
      </button>
      <button aria-label="Show desktop" className="ml-[9px] h-full w-[5px] border-l border-[#56606b]" />
    </div>
  </footer>
);

export default function App() {
  return (
    <div className="flex h-screen flex-col overflow-hidden bg-[radial-gradient(ellipse_100%_160%_at_6%_75%,#00b4ff_0%,#00b0ff_22%,#009df2_40%,#007be2_58%,#0458cf_75%,#0543bf_92%,#0838b5_100%)] font-['Noto_Sans','Liberation_Sans',sans-serif] text-[11px]">
      <div className="relative min-h-0 flex-1 overflow-hidden">
        <div className="flex">
          {DESKTOP.map((column, i) => (
            <div key={i} className="flex w-[75px] shrink-0 flex-col">
              {column.map((item, j) => <DesktopCell key={j} item={item} />)}
            </div>
          ))}
        </div>
        <ArchiveWindow />
        <Watermark />
      </div>
      <Taskbar />
    </div>
  );
}
